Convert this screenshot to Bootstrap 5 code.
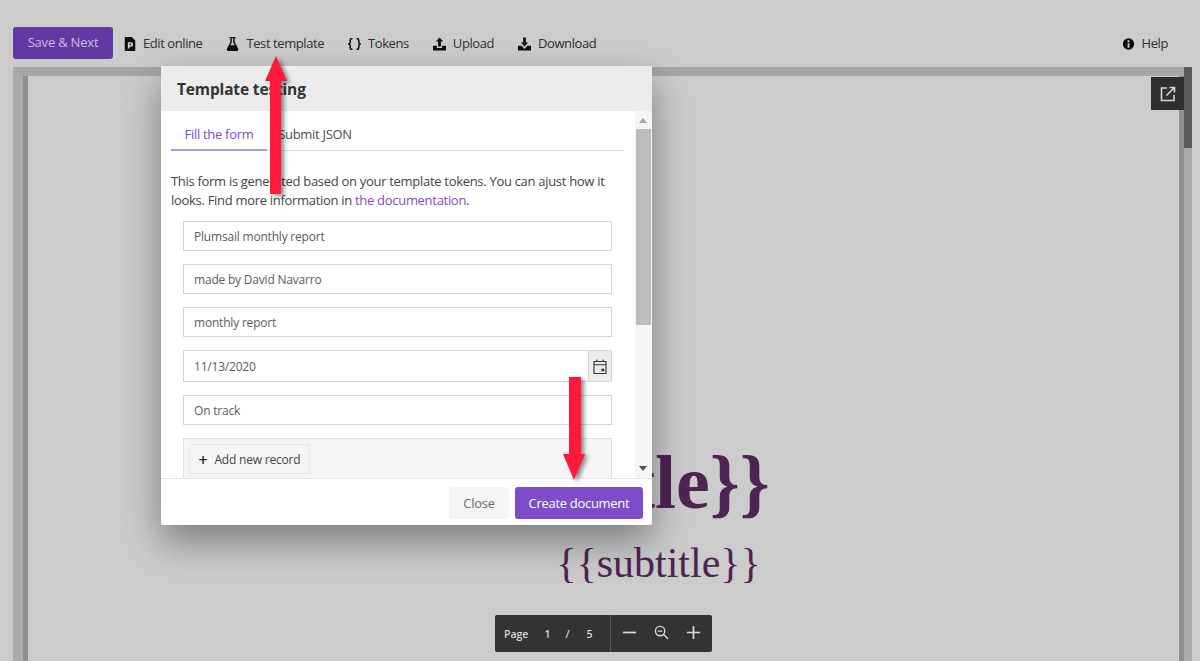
<!DOCTYPE html>
<html lang="en">
<head>
  <meta charset="UTF-8" />
  <meta name="viewport" content="width=device-width, initial-scale=1.0"/>
  <title>Template testing</title>
  <link href="https://cdn.jsdelivr.net/npm/bootstrap@5.3.0/dist/css/bootstrap.min.css" rel="stylesheet"/>
  <style>
    html, body {
      height: 100%;
      overflow: hidden;
    }
    body {
      background-color: #cccccc;
      font-family: "Open Sans", "Liberation Sans", sans-serif;
      font-size: 13px;
      letter-spacing: -0.3px;
      color: #2f2f2f;
      position: relative;
    }
    .page-shell {
      height: 661px;
      padding: 27px 8px 0 13px;
    }
    .tool-row {
      height: 32px;
      margin-bottom: 8px;
      padding-right: 24px;
    }
    .save-btn {
      width: 100px;
      height: 32px;
      padding: 0;
      margin-right: 11px;
      background-color: #6238a3;
      border: 0;
      border-radius: 3px;
      color: #c9bddb;
      font-size: 13px;
      letter-spacing: -0.2px;
    }
    .tool-btn {
      padding: 2px 0 0;
      border: 0;
      font-size: 13px;
      letter-spacing: -0.42px;
      color: #2f2f2f;
      gap: 7px;
    }
    .tool-btn svg {
      width: 13px;
      height: 14px;
      fill: #0c0c0c;
      margin-top: -1px;
    }
    .tool-btn svg.thin-icon {
      width: 12px;
    }
    .viewer-frame {
      position: relative;
      height: 620px;
      border-top: 9px solid #a6a6a6;
      border-left: 10px solid #ababab;
      border-right: 8px solid #ababab;
      background-color: #cccccc;
    }
    .doc-sheet {
      height: 100%;
      margin: 0 5px;
      box-shadow: -5px 0 0 #8f8f8f, 5px 0 0 #8f8f8f;
      background-color: #cccccc;
      padding: 366px 0 0 110px;
      font-family: "Liberation Serif", serif;
      color: #4e2452;
      text-align: center;
      letter-spacing: 0;
    }
    .doc-title {
      font-size: 76px;
      font-weight: 700;
      line-height: 80px;
      margin: 0 0 16px 0;
      padding-right: 24px;
    }
    .doc-subtitle {
      font-size: 42px;
      line-height: 50px;
      margin: 0;
    }
    .scroll-dark {
      position: absolute;
      top: -9px;
      right: -8px;
      width: 8px;
      height: 81px;
      background-color: #595959;
    }
    .open-btn {
      position: absolute;
      top: 1px;
      right: 0;
      width: 33px;
      height: 33px;
      background-color: #2f2f2f;
    }
    .open-btn svg {
      width: 16px;
      height: 16px;
    }
    .pager-bar {
      position: absolute;
      left: 495px;
      top: 615px;
      width: 217px;
      height: 37px;
      background-color: #333333;
      border-radius: 2px;
      color: #d8d8d8;
      font-size: 10.5px;
      font-weight: 600;
      letter-spacing: 0;
    }
    .pager-info {
      width: 116px;
      padding: 2px 0 0 9px;
      border-right: 1px solid #5a5a5a;
    }
    .pager-info span:nth-child(2) { margin-left: 16px; }
    .pager-info span:nth-child(3) { margin-left: 15px; }
    .pager-info span:nth-child(4) { margin-left: 17px; }
    .pager-tools {
      flex: 1;
      padding: 0 11px 3px 11px;
    }
    .pager-tools svg {
      width: 15px;
      height: 15px;
    }
    .test-dialog {
      position: absolute;
      left: 161px;
      top: 66px;
      width: 491px;
      height: 459px;
      background-color: #ffffff;
      border: 0;
      border-radius: 2px;
      overflow: hidden;
      box-shadow: 0 16px 38px rgba(20, 20, 30, 0.44);
    }
    .test-dialog .modal-header {
      height: 45px;
      padding: 2px 16px 0;
      background-color: #ececec;
      border: 0;
      border-radius: 0;
    }
    .test-dialog .modal-title {
      font-size: 15.5px;
      font-weight: 700;
      letter-spacing: -0.15px;
      color: #333333;
    }
    .dialog-middle {
      height: 367px;
      overflow: hidden;
    }
    .dialog-form {
      flex: 1;
      overflow: hidden;
      padding: 10px 11px 0 10px;
    }
    .form-tabs {
      height: 30px;
      border-bottom: 1px solid #dcdcdc;
    }
    .form-tabs .nav-link {
      height: 30px;
      width: 96px;
      padding: 4px 0 0;
      text-align: center;
      color: #4d4d4d;
      font-size: 13px;
      border: 0;
      border-radius: 0;
      background: none;
    }
    .form-tabs .nav-link.active {
      color: #7e4bc9;
      border-bottom: 2px solid #b394e0;
    }
    .form-tabs .nav-link + .nav-link {
      width: 102px;
      letter-spacing: 0.2px;
    }
    .form-intro {
      margin: 21px 0 11px;
      line-height: 19px;
      color: #444444;
    }
    .form-intro a {
      color: #7e4bc9;
      text-decoration: none;
    }
    .form-fields {
      margin: 0 12px;
      gap: 13px;
    }
    .form-fields .form-control {
      height: 30px;
      padding: 0 10px;
      border: 1px solid #d4d6da;
      border-radius: 0;
      font-size: 12px;
      letter-spacing: -0.2px;
      color: #5c5c5c;
    }
    .form-fields .date-group .form-control {
      height: 32px;
    }
    .date-group .input-group-text {
      width: 24px;
      padding: 0;
      justify-content: center;
      background-color: #ececec;
      border: 1px solid #d4d6da;
      border-left: 0;
      border-radius: 0;
    }
    .date-group svg {
      width: 14px;
      height: 15px;
    }
    .record-box {
      height: 60px;
      padding: 5px;
      background-color: #f4f6f6;
      border: 1px solid #dfe1e4;
    }
    .add-btn {
      width: 121px;
      height: 30px;
      padding: 1px 0 0;
      background-color: #f4f6f6;
      border: 1px solid #e6e8ea;
      border-radius: 0;
      font-size: 12px;
      letter-spacing: -0.2px;
      color: #444444;
    }
    .add-btn b {
      font-size: 16px;
      font-weight: 600;
      line-height: 1;
      margin-right: 7px;
      color: #222222;
    }
    .fake-scroll {
      width: 17px;
      background-color: #f4f5f5;
    }
    .fake-scroll i {
      display: block;
      height: 18px;
      position: relative;
    }
    .fake-scroll i::after {
      content: "";
      position: absolute;
      left: 4px;
      border-left: 4px solid transparent;
      border-right: 4px solid transparent;
    }
    .fake-scroll .arrow-up::after {
      top: 7px;
      border-bottom: 5px solid #a8a8a8;
    }
    .fake-scroll .arrow-down::after {
      top: 6px;
      border-top: 5px solid #505050;
    }
    .scroll-thumb {
      height: 196px;
      margin: 0 1px;
      background-color: #bdbdbd;
    }
    .test-dialog .modal-footer {
      height: 47px;
      padding: 8px 9px 0 0;
      align-items: flex-start;
      gap: 6px;
      border-top: 1px solid #e5e5e5;
      border-radius: 0;
      flex-wrap: nowrap;
    }
    .test-dialog .modal-footer .btn {
      margin: 0;
      height: 32px;
      padding: 1px 0 0;
      border: 0;
      border-radius: 3px;
      font-size: 13px;
      letter-spacing: -0.3px;
    }
    .close-btn {
      width: 60px;
      background-color: #f4f5f5;
      color: #6b6b6b;
    }
    .create-btn {
      width: 128px;
      background-color: #7e4bc9;
      color: #ffffff;
    }
    .red-arrow {
      position: absolute;
      filter: drop-shadow(3px 2px 2px rgba(0, 0, 0, 0.45));
    }
    .arrow-test {
      left: 262px;
      top: 54px;
      width: 28px;
      height: 142px;
    }
    .arrow-create {
      left: 560px;
      top: 375px;
      width: 28px;
      height: 107px;
    }
  </style>
</head>
<body>

  <div class="page-shell d-flex flex-column">
    <!-- Toolbar -->
    <div class="tool-row d-flex align-items-center">
      <button class="btn save-btn" type="button">Save &amp; Next</button>
      <button class="btn tool-btn d-flex align-items-center" type="button">
        <svg class="thin-icon" viewBox="0 0 12 16"><path d="M0 0h8l4 4v12H0zM3.500 6v7h2v-2h1.600a2.500 2.500 0 0 0 0-5zm2 1.800h1.400a.8.8 0 0 1 0 1.500H5.500z" fill-rule="evenodd"/></svg>
        Edit online
      </button>
      <button class="btn tool-btn d-flex align-items-center ms-4" type="button">
        <svg viewBox="0 0 14 16"><path d="M3.500 0h7v1.400h-1v4.400l4 7.700c.6 1.100-.1 2.500-1.400 2.500H2c-1.300 0-2-1.400-1.400-2.500l4-7.700V1.400h-1.100zm2.700 1.400v4.800L4.400 9.500h5.200L7.800 6.200V1.400z" fill-rule="evenodd"/></svg>
        Test template
      </button>
      <button class="btn tool-btn d-flex align-items-center ms-4" type="button">
        <svg viewBox="0 0 16 16"><path d="M5.500 1.500H4.300C3 1.500 2.700 2.300 2.700 3.300v2.800c0 1-.6 1.500-1.700 1.900 1.100.4 1.700.9 1.700 1.900v2.800c0 1 .3 1.800 1.600 1.800h1.200M10.500 1.500h1.200c1.300 0 1.600.8 1.600 1.800v2.800c0 1 .6 1.500 1.700 1.900-1.100.4-1.700.9-1.700 1.900v2.800c0 1-.3 1.800-1.600 1.800h-1.200" fill="none" stroke="#0c0c0c" stroke-width="1.900"/></svg>
        Tokens
      </button>
      <button class="btn tool-btn d-flex align-items-center ms-4" type="button">
        <svg viewBox="0 0 16 16"><path d="M8 0l4.500 5H9.700v6H6.300V5H3.500zM0 10h4.800v2.800h6.400V10H16v6H0z"/></svg>
        Upload
      </button>
      <button class="btn tool-btn d-flex align-items-center ms-4" type="button">
        <svg viewBox="0 0 16 16"><path d="M6.300 0h3.400v6h2.800L8 11.200 3.500 6h2.800zM0 10h4.300L8 14l3.700-4H16v6H0z"/></svg>
        Download
      </button>
      <button class="btn tool-btn d-flex align-items-center ms-auto" type="button">
        <svg viewBox="0 0 16 16"><path d="M8 1a7 7 0 1 1 0 14A7 7 0 0 1 8 1zM6.900 3.500v2.200h2.200V3.500zM6.900 7v5.500h2.200V7z" fill-rule="evenodd"/></svg>
        Help
      </button>
    </div>

    <!-- Document viewer -->
    <div class="viewer-frame">
      <div class="doc-sheet">
        <p class="doc-title">{{title}}</p>
        <p class="doc-subtitle">{{subtitle}}</p>
      </div>
      <div class="scroll-dark"></div>
      <div class="open-btn d-flex align-items-center justify-content-center">
        <svg viewBox="0 0 16 16" fill="none" stroke="#d6d6d6" stroke-width="1.600"><path d="M7 2H1.500v12.500H14V9M9.500 1.500h5v5M14.500 1.500L6.500 9.500"/></svg>
      </div>
    </div>
  </div>

  <!-- Page controls -->
  <div class="pager-bar d-flex align-items-stretch">
    <div class="pager-info d-flex align-items-center">
      <span>Page</span><span>1</span><span>/</span><span>5</span>
    </div>
    <div class="pager-tools d-flex align-items-center justify-content-between">
      <svg viewBox="0 0 16 16" stroke="#d8d8d8" stroke-width="1.800"><path d="M1 8h14"/></svg>
      <svg viewBox="0 0 16 16" fill="none" stroke="#d8d8d8" stroke-width="1.500"><circle cx="6.500" cy="6.500" r="5"/><path d="M10.200 10.200L15 15M4 6.500h5"/></svg>
      <svg viewBox="0 0 16 16" stroke="#d8d8d8" stroke-width="1.800"><path d="M1 8h14M8 1v14"/></svg>
    </div>
  </div>

  <!-- Template testing dialog -->
  <div class="modal-content test-dialog">
    <div class="modal-header">
      <h5 class="modal-title">Template testing</h5>
    </div>
    <div class="dialog-middle d-flex">
      <div class="dialog-form">
        <ul class="nav form-tabs">
          <li class="nav-item"><a class="nav-link active" href="#">Fill the form</a></li>
          <li class="nav-item"><a class="nav-link" href="#">Submit JSON</a></li>
        </ul>
        <p class="form-intro">This form is generated based on your template tokens. You can ajust how it looks. Find more information in <a href="#">the documentation</a>.</p>
        <div class="form-fields d-flex flex-column">
          <input class="form-control" type="text" value="Plumsail monthly report" />
          <input class="form-control" type="text" value="made by David Navarro" />
          <input class="form-control" type="text" value="monthly report" />
          <div class="input-group date-group">
            <input class="form-control" type="text" value="11/13/2020" />
            <span class="input-group-text">
              <svg viewBox="0 0 14 16" fill="#333"><path d="M0 2h3V.5h1.200V2h5.600V.5H11V2h3v14H0zM1.200 3.200v2.300h11.600V3.200zM1.200 6.700v8.100h11.600V6.700zM8.500 10.500h3v2.500h-3z" fill-rule="evenodd"/></svg>
            </span>
          </div>
          <input class="form-control" type="text" value="On track" />
          <div class="record-box">
            <button class="btn add-btn d-flex align-items-center justify-content-center" type="button"><b>+</b>Add new record</button>
          </div>
        </div>
      </div>
      <div class="fake-scroll d-flex flex-column">
        <i class="arrow-up"></i>
        <div class="scroll-thumb"></div>
        <div class="flex-grow-1"></div>
        <i class="arrow-down"></i>
      </div>
    </div>
    <div class="modal-footer">
      <button class="btn close-btn" type="button">Close</button>
      <button class="btn create-btn" type="button">Create document</button>
    </div>
  </div>

  <!-- Annotation arrows -->
  <svg class="red-arrow arrow-test" viewBox="0 0 28 142"><path fill="#ff1a3c" d="M14 2L25 27H19V140H8V27H3z"/></svg>
  <svg class="red-arrow arrow-create" viewBox="0 0 28 107"><path fill="#ff1a3c" d="M9 2H21V79H25L14 105 3 79H9z"/></svg>

</body>
</html>
